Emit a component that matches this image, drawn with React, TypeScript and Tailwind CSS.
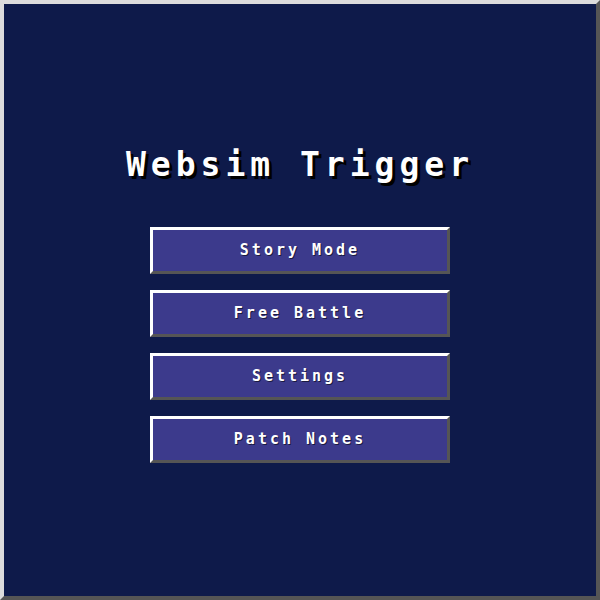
import * as React from 'react';

const items = ['Story Mode', 'Free Battle', 'Settings', 'Patch Notes'];

export default function App() {
  return (
    <div
      className="w-[600px] h-[600px] bg-[#0e1a4a] border-4 border-t-[#dcdcdc] border-l-[#dcdcdc] border-r-[#555555] border-b-[#555555] flex flex-col items-center pt-[141px]"
      style={{ fontFamily: '"DejaVu Sans Mono", "Liberation Mono", monospace' }}
    >
      {/* Title */}
      <h1 className="text-[33px] leading-[40px] font-bold text-white tracking-[5px] [text-shadow:3px_3px_0_#000]">
        Websim Trigger
      </h1>

      <div className="mt-[42px] flex flex-col gap-4">
        {items.map((label) => (
          <button
            key={label}
            className="w-[300px] h-[47px] bg-[#3c3a8c] border-[3px] border-t-white border-l-white border-r-[#555555] border-b-[#555555] text-white text-[15px] font-bold tracking-[3px] [text-shadow:1px_1px_0_#1a1a40]"
          >
            {label}
          </button>
        ))}
      </div>
    </div>
  );
}
